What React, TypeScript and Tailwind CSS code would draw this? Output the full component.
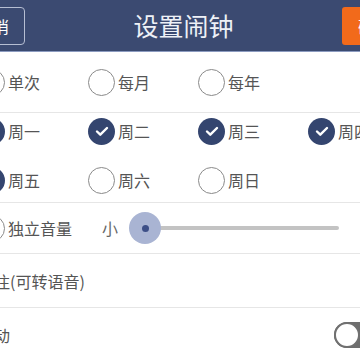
const font = "font-['Noto_Sans_CJK_SC','Noto_Sans',sans-serif]"

function Radio() {
  return <span className="size-[27px] shrink-0 rounded-full border-[1.5px] border-[#8a8a8a] bg-white" />
}

function Checked() {
  return (
    <span className="flex size-[27px] shrink-0 items-center justify-center rounded-full bg-[#34456f]">
      <svg width="16" height="16" viewBox="0 0 16 16" fill="none" stroke="white" strokeWidth="2.4" strokeLinecap="round" strokeLinejoin="round">
        <path d="M3 8.5l3.3 3.2L13 5" />
      </svg>
    </span>
  )
}

function Option({ label, checked }: { label: string; checked?: boolean }) {
  return (
    <div className="flex w-[110px] shrink-0 items-center gap-[3px]">
      {checked ? <Checked /> : <Radio />}
      <span className="text-[16px] text-[#555]">{label}</span>
    </div>
  )
}

const Divider = () => <div className="h-px bg-[#e6e6e6]" />

export default function App() {
  return (
    <div className={`h-[360px] w-[360px] overflow-hidden bg-white ${font}`}>
      {/* header */}
      <div className="-ml-[49px] flex h-[52px] w-[465px] items-center justify-between border-b border-[#8c9bc0] bg-[#3b4a71] px-[10px]">
        <button className="flex h-[38px] w-[64px] items-center justify-center rounded-[4px] border border-[#b6bed2] text-[16px] text-white">
          取消
        </button>
        <span className="text-[25px] text-[#eef1f7]">设置闹钟</span>
        <button className="flex h-[38px] w-[64px] items-center justify-center rounded-[3px] bg-[#f26a1b] text-[16px] text-white">
          确定
        </button>
      </div>

      <div className="-ml-[32px] w-[432px]">
        {/* repeat type */}
        <div className="flex h-[60px] items-center px-[10px]">
          <Option label="单次" />
          <Option label="每月" />
          <Option label="每年" />
        </div>
        <Divider />

        {/* weekdays */}
        <div className="flex flex-col gap-[13px] px-[10px] pb-[4px]">
          <div className="flex h-[36px] items-center">
            <Option label="周一" checked />
            <Option label="周二" checked />
            <Option label="周三" checked />
            <Option label="周四" checked />
          </div>
          <div className="flex h-[36px] items-center">
            <Option label="周五" checked />
            <Option label="周六" />
            <Option label="周日" />
          </div>
        </div>
        <Divider />

        {/* volume */}
        <div className="flex h-[50px] items-center px-[10px]">
          <div className="flex items-center gap-[3px]">
            <Radio />
            <span className="text-[16px] text-[#555]">独立音量</span>
          </div>
          <span className="ml-[30px] text-[16px] text-[#666]">小</span>
          <div className="relative ml-[11px] flex h-[32px] w-[210px] items-center">
            <div className="ml-[16px] h-[4px] w-[194px] rounded-full bg-[#c3c3c3]" />
            <div className="absolute left-0 top-0 flex size-[32px] items-center justify-center rounded-full bg-[#a9b4d3]">
              <span className="size-[7px] rounded-full bg-[#3d4f87]" />
            </div>
          </div>
        </div>
        <Divider />

        {/* note */}
        <div className="flex h-[53px] items-center px-[10px]">
          <span className="text-[16px] text-[#555]">备注(可转语音)</span>
        </div>
        <Divider />

        {/* vibrate */}
        <div className="flex h-[53px] items-center justify-between px-[10px]">
          <span className="text-[16px] text-[#555]">震动</span>
          <div className="relative mr-[-4px] h-[26px] w-[60px] rounded-full bg-[#6e6e6e]">
            <span className="absolute left-0 top-0 size-[26px] rounded-full border-2 border-[#707070] bg-white" />
          </div>
        </div>
      </div>
    </div>
  )
}
